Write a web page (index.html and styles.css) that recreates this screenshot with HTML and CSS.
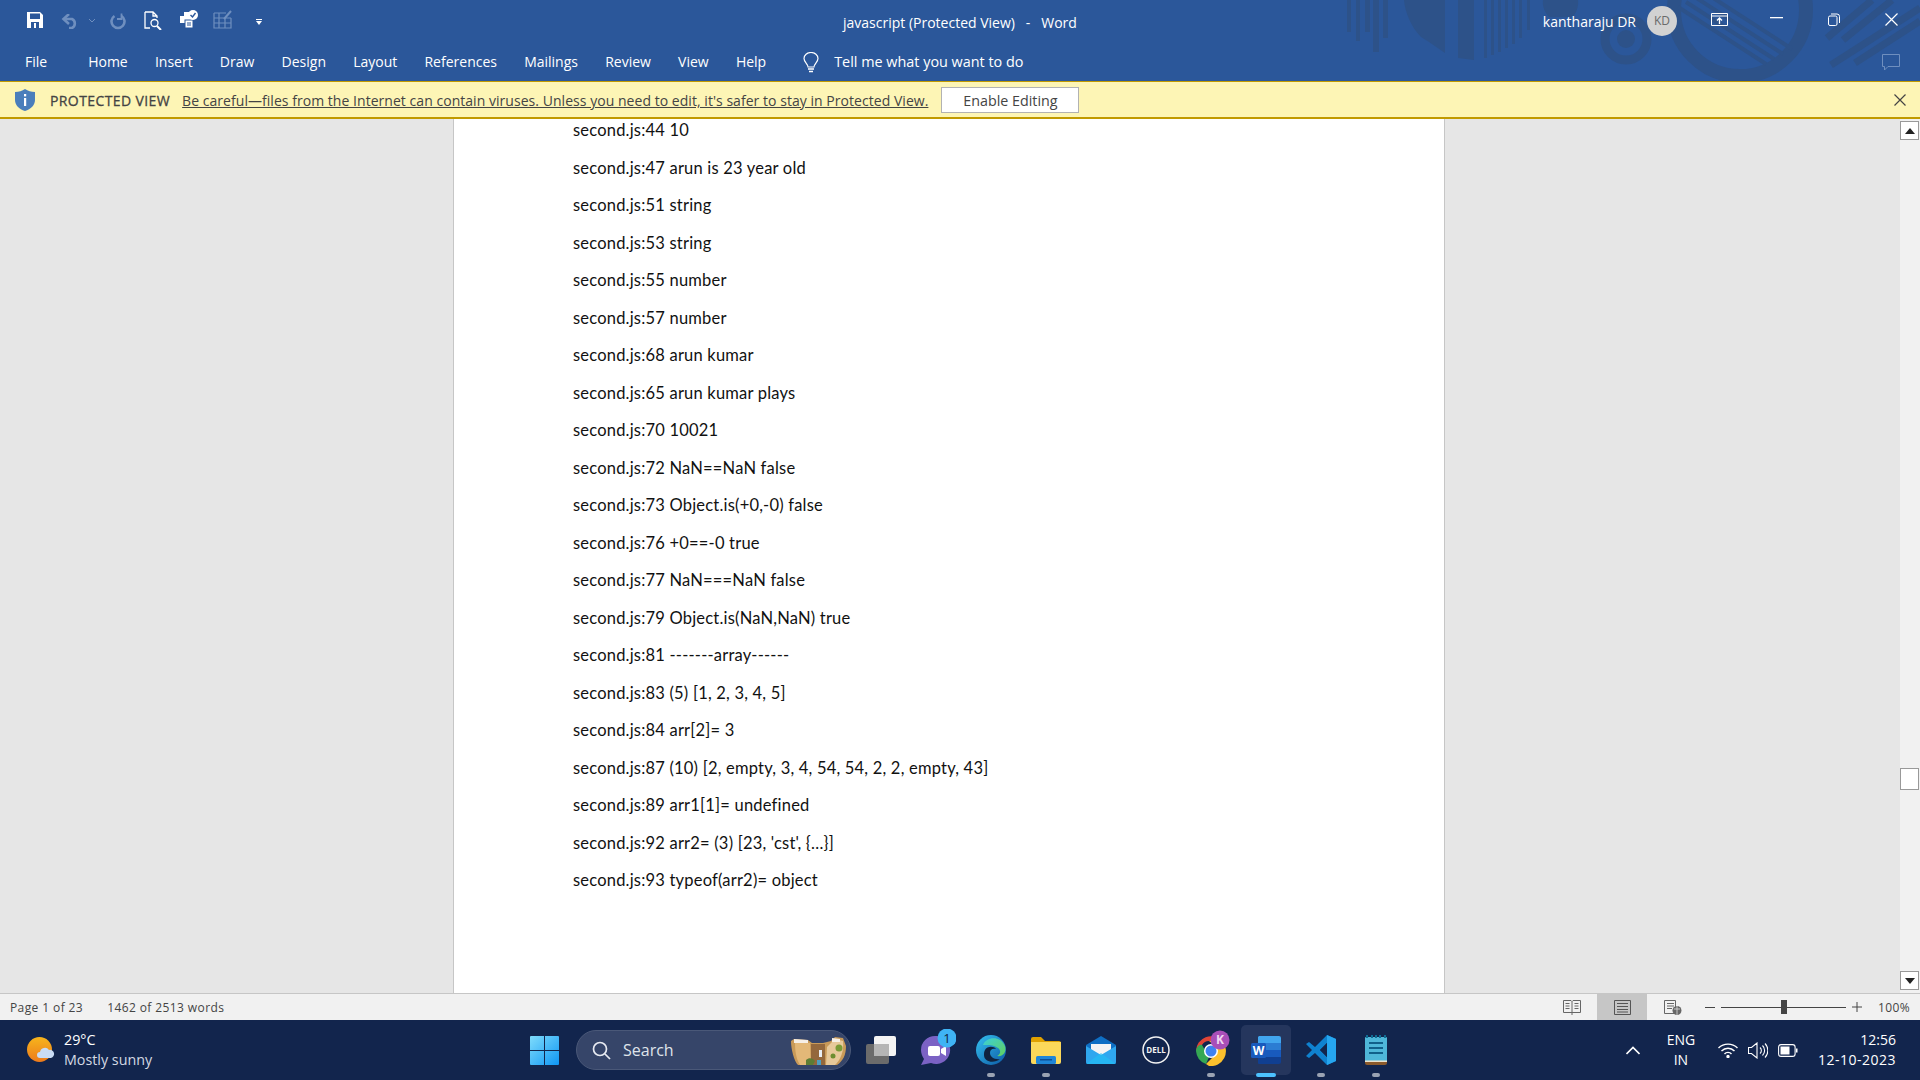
FILE: index.html
```html
<!DOCTYPE html>
<html lang="en">
<head>
    <meta charset="UTF-8">
    <title>javascript (Protected View) - Word</title>
    <link rel="stylesheet" href="styles.css">
</head>
<body>
    <header class="ribbon">
        <!-- faded pattern behind the window buttons -->
        <svg class="ribbon-art" width="620" height="81" viewBox="0 0 620 81">
            <g fill="#2d5289">
                <rect x="47" y="0" width="4" height="32"/><rect x="56" y="0" width="4" height="41"/><rect x="65" y="0" width="5" height="32"/><rect x="73" y="0" width="6" height="52"/><rect x="83" y="0" width="5" height="38"/>
                <path d="M104 0h25v42l-8-5C111 27 105 12 104 0z"/>
                <path d="M129 0h16v53l-16-11z"/>
                <path d="M158 0h16v60l-16-2z"/>
                <rect x="184" y="0" width="3" height="58"/><rect x="191" y="0" width="3" height="55"/><rect x="198" y="0" width="3" height="52"/><rect x="205" y="0" width="3" height="48"/><rect x="212" y="0" width="3" height="44"/><rect x="219" y="0" width="3" height="38"/><rect x="227" y="0" width="3" height="30"/>
                <path d="M243 0h35c1 6-2 14-6 17h-23c-4-4-7-11-6-17z"/>
                <circle cx="326" cy="39" r="9"/>
            </g>
            <g fill="none" stroke="#2d5289">
                <circle cx="326" cy="39" r="21" stroke-width="9"/>
                <circle cx="440" cy="10" r="66" stroke-width="14"/>
                <path d="M378 7l88 57M386 2l88 57M395 -3l88 57M404 -8l88 57" stroke-width="4"/>
                <path d="M527 38L572 0M543 40L592 0M531 65L620 8M555 63L620 21" stroke-width="7"/>
            </g>
        </svg>

        <div class="title-row">
            <div class="quick-access">
                <svg class="qa-save" width="16" height="16" viewBox="0 0 16 16"><path d="M0 0h13l3 3v13H0z" fill="#fff"/><rect x="3" y="1.5" width="10" height="5.5" fill="#2b579a"/><rect x="4" y="10" width="8" height="6" fill="#2b579a"/><rect x="7" y="11" width="2" height="5" fill="#fff"/></svg>
                <svg class="qa-undo" width="18" height="15" viewBox="0 0 18 15" fill="none" stroke="#6f8fbf" stroke-width="2.6"><path d="M3 5h8a5 5 0 0 1 0 9H8"/><path d="M8 0L2.5 5 8 10"/></svg>
                <svg class="qa-drop" width="6" height="4" viewBox="0 0 6 4" fill="none" stroke="#6f8fbf"><path d="M0 0l3 3 3-3"/></svg>
                <svg class="qa-redo" width="16" height="17" viewBox="0 0 16 17" fill="none" stroke="#6f8fbf" stroke-width="2.6"><path d="M4.5 3a6.5 6.5 0 1 0 7 0"/><path d="M11.500 .5v5.500h-4.500" stroke-width="1.800"/></svg>
                <svg class="qa-preview" width="18" height="19" viewBox="0 0 18 19" fill="none" stroke="#fff" stroke-width="1.3"><path d="M1 1h8l4 4v2M9 1v4h4M1 1v16h5"/><circle cx="10.5" cy="12" r="3.5"/><path d="M13 15l4 4" stroke-width="2"/></svg>
                <svg class="qa-print" width="20" height="19" viewBox="0 0 20 19"><path d="M1 6h4V2h6v4h3v7H1z" fill="#fff"/><rect x="6" y="10" width="8" height="8" fill="#fff" stroke="#2b579a"/><path d="M8 13h4M8 15h4" stroke="#2b579a"/><circle cx="14" cy="5" r="5" fill="#fff"/><path d="M11.5 5l2 2 3-4" fill="none" stroke="#2b579a" stroke-width="1.4"/></svg>
                <svg class="qa-table" width="20" height="19" viewBox="0 0 20 19" fill="none" stroke="#6f8fbf" stroke-width="1.2"><path d="M1 3h12M1 3v15h17V8M1 8h17M1 13h17M6 3v15M12 8v10"/><path d="M11 9l7-8" stroke-width="2"/></svg>
                <svg class="qa-more" width="6" height="6" viewBox="0 0 6 6"><path d="M0 0h6v1H0zM0 2h6L3 6z" fill="#fff"/></svg>
            </div>
            <div class="doc-title">javascript (Protected View)&nbsp;&nbsp; -&nbsp;&nbsp; Word</div>
            <div class="account">
                <span class="user-name">kantharaju DR</span>
                <span class="avatar">KD</span>
                <svg class="win-ribbon" width="17" height="13" viewBox="0 0 17 13" fill="none" stroke="#fff"><path d="M.5.5h16v12H.5zM.5 3h16" stroke-width="1"/><path d="M8.5 11V5M6 7.5l2.5-2.5L11 7.5" stroke-width="1.3"/></svg>
                <svg class="win-min" width="13" height="2" viewBox="0 0 13 2"><rect width="13" height="1.3" fill="#fff"/></svg>
                <svg class="win-restore" width="12" height="13" viewBox="0 0 12 13" fill="none" stroke="#fff"><rect x=".5" y="3" width="8.5" height="9.5" rx="1.5"/><path d="M3 1h6a2.5 2.5 0 0 1 2.5 2.5V10"/></svg>
                <svg class="win-close" width="13" height="13" viewBox="0 0 13 13" stroke="#fff" stroke-width="1.2"><path d="M.5.5l12 12M12.5.5l-12 12"/></svg>
            </div>
        </div>

        <nav class="tab-row">
            <span class="tab tab-file">File</span>
            <span class="tab tab-home">Home</span>
            <span class="tab">Insert</span>
            <span class="tab">Draw</span>
            <span class="tab">Design</span>
            <span class="tab">Layout</span>
            <span class="tab">References</span>
            <span class="tab">Mailings</span>
            <span class="tab">Review</span>
            <span class="tab">View</span>
            <span class="tab">Help</span>
            <svg class="bulb" width="16" height="21" viewBox="0 0 16 21" fill="none" stroke="#fff" stroke-width="1.2"><path d="M5 15c0-3-4-5-4-8.500a7 6 0 0 1 14 0C15 10 11 12 11 15z"/><path d="M5 17h6M6 19.5h4" stroke-width="1.5"/></svg>
            <span class="tell-me">Tell me what you want to do</span>
            <svg class="comment-icon" width="18" height="17" viewBox="0 0 18 17" fill="none" stroke="#6f8fbf"><path d="M.5.5h17v12H6L2.5 16v-3.500h-2z"/></svg>
        </nav>
    </header>

    <div class="protected-bar">
        <svg class="shield" width="20" height="22" viewBox="0 0 20 22"><path d="M10 0c3 2 6 3 10 3v8c0 5-4 9-10 11C4 20 0 16 0 11V3c4 0 7-1 10-3z" fill="#4a7ebb"/><rect x="9" y="9" width="2.2" height="8" fill="#fff"/><rect x="9" y="5" width="2.2" height="2.4" fill="#fff"/></svg>
        <strong class="protected-label">PROTECTED VIEW</strong>
        <span class="protected-msg">Be careful—files from the Internet can contain viruses. Unless you need to edit, it's safer to stay in Protected View.</span>
        <button class="enable-btn">Enable Editing</button>
        <svg class="bar-close" width="12" height="12" viewBox="0 0 12 12" stroke="#444" stroke-width="1.2"><path d="M.5.5l11 11M11.5.5l-11 11"/></svg>
    </div>

    <main class="workspace">
        <div class="page">
            <p>second.js:44 10</p>
            <p>second.js:47 arun is 23 year old</p>
            <p>second.js:51 string</p>
            <p>second.js:53 string</p>
            <p>second.js:55 number</p>
            <p>second.js:57 number</p>
            <p>second.js:68 arun kumar</p>
            <p>second.js:65 arun kumar plays</p>
            <p>second.js:70 10021</p>
            <p>second.js:72 NaN==NaN false</p>
            <p>second.js:73 Object.is(+0,-0) false</p>
            <p>second.js:76 +0==-0 true</p>
            <p>second.js:77 NaN===NaN false</p>
            <p>second.js:79 Object.is(NaN,NaN) true</p>
            <p>second.js:81 -------array------</p>
            <p>second.js:83 (5) [1, 2, 3, 4, 5]</p>
            <p>second.js:84 arr[2]= 3</p>
            <p>second.js:87 (10) [2, empty, 3, 4, 54, 54, 2, 2, empty, 43]</p>
            <p>second.js:89 arr1[1]= undefined</p>
            <p>second.js:92 arr2= (3) [23, 'cst', {…}]</p>
            <p>second.js:93 typeof(arr2)= object</p>
        </div>
        <div class="scrollbar">
            <span class="scroll-btn"><svg width="10" height="6" viewBox="0 0 10 6"><path d="M5 0l5 6H0z" fill="#222"/></svg></span>
            <span class="scroll-thumb"></span>
            <span class="scroll-btn scroll-down"><svg width="10" height="6" viewBox="0 0 10 6"><path d="M0 0h10L5 6z" fill="#222"/></svg></span>
        </div>
    </main>

    <footer class="status-bar">
        <span class="status-page">Page 1 of 23</span>
        <span class="status-words">1462 of 2513 words</span>
        <div class="status-right">
            <svg class="view-read" width="18" height="15" viewBox="0 0 18 15" fill="none" stroke="#666"><path d="M.5.5h7.5l1 1 1-1h7.500v12H.5zM9 1.500V15M2.500 3.500h4M2.500 6h4M2.500 8.500h4M11.500 3.500h4M11.500 6h4M11.500 8.500h4"/></svg>
            <span class="view-print"><svg width="17" height="15" viewBox="0 0 17 15" fill="none" stroke="#555"><path d="M.5.5h16v14H.5zM3 3.5h11M3 6.5h11M3 9.5h11M3 12h11"/></svg></span>
            <svg class="view-web" width="18" height="15" viewBox="0 0 18 15"><path d="M.5.5h11v13H.5zM3 3.5h7M3 6h7M3 8.5h5" fill="none" stroke="#666"/><circle cx="13" cy="10.5" r="4.5" fill="#666"/><path d="M10 9h6M13 6v9" stroke="#ddd" stroke-width=".8"/></svg>
            <span class="zoom-minus"></span>
            <div class="zoom-track"><span class="zoom-thumb"></span></div>
            <svg class="zoom-plus" width="10" height="10" viewBox="0 0 10 10" stroke="#444"><path d="M0 5h10M5 0v10"/></svg>
            <span class="zoom-pct">100%</span>
        </div>
    </footer>

    <div class="taskbar">
        <div class="weather">
            <svg width="28" height="26" viewBox="0 0 28 26">
                <defs><linearGradient id="sun" x1="0" y1="0" x2="0" y2="1"><stop offset="0" stop-color="#f7b51c"/><stop offset="1" stop-color="#ec7a1c"/></linearGradient></defs>
                <ellipse cx="12.5" cy="12.5" rx="12.5" ry="12.5" fill="url(#sun)"/>
                <path d="M13 21a3 3 0 0 1 0-6 5 5 0 0 1 9-2 4 4 0 0 1 2 8z" fill="#c9dcf5"/>
            </svg>
            <div class="weather-text">
                <span class="weather-temp">29°C</span>
                <span class="weather-desc">Mostly sunny</span>
            </div>
        </div>

        <div class="task-center">
            <span class="task-item">
                <svg width="29" height="29" viewBox="0 0 29 29">
                    <defs><linearGradient id="winlogo" x1="0" y1="0" x2="1" y2="1"><stop offset="0" stop-color="#7fdcfb"/><stop offset="1" stop-color="#0f96f5"/></linearGradient></defs>
                    <path d="M1 0h13v14H0V1a1 1 0 0 1 1-1zM15 0h13a1 1 0 0 1 1 1v13H15zM0 15h14v14H1a1 1 0 0 1-1-1zM15 15h14v13a1 1 0 0 1-1 1H15z" fill="url(#winlogo)"/>
                </svg>
            </span>
            <div class="search-pill">
                <svg width="19" height="19" viewBox="0 0 19 19" fill="none" stroke="#e8ebf2" stroke-width="1.7"><circle cx="8" cy="8" r="6.5"/><path d="M13 13l5 5"/></svg>
                <span class="search-label">Search</span>
                <svg class="search-art" width="55" height="30" viewBox="0 0 55 30">
                    <path d="M0 6l3-2 14 1 4 3h11l8-2 4-4 8 1 3 8c0 9-3 15-9 19H7C3 26 0 14 0 6z" fill="#c99a58"/>
                    <path d="M4 8h15l1 22H9C5 24 4 15 4 8z" fill="#e3b878"/>
                    <path d="M20 9h14v21H20z" fill="#94683c"/>
                    <path d="M36 12l8-8 8 2c1 10-2 18-8 24h-9z" fill="#e7c99a"/>
                    <path d="M3 4l14 1v3H3zM41 3l8 1v3h-8z" fill="#f6efe6"/>
                    <circle cx="48" cy="13" r="3.5" fill="#7a9a36"/><circle cx="42" cy="21" r="2.5" fill="#6d8d30"/>
                    <path d="M15 25c3-3 7-2 9 1l-2 4h-7z" fill="#5d7d35"/>
                    <rect x="28" y="15" width="3" height="7" fill="#e9eef4"/><rect x="26" y="25" width="4" height="5" fill="#4f9fc0"/>
                </svg>
            </div>
            <span class="task-item">
                <svg width="30" height="28" viewBox="0 0 30 28"><rect x="0" y="8" width="23" height="20" rx="2" fill="#6b6b6b"/><rect x="8" y="0" width="22" height="20" rx="2" fill="#f4f4f4"/><rect x="8" y="8" width="15" height="12" fill="#b5b5b5"/></svg>
            </span>
            <span class="task-item">
                <svg class="teams" width="40" height="36" viewBox="0 0 40 36">
                    <path d="M5 21a14 14 0 0 1 14-14h2a14 14 0 1 1-6 27l-10 2 3-6c-2-3-3-6-3-9z" fill="#7b62c4"/>
                    <rect x="12" y="17" width="12" height="10" rx="2" fill="#fff"/><path d="M25 20l5-3v10l-5-3z" fill="#fff"/>
                    <circle cx="31" cy="9" r="9.5" fill="#3fb4f5"/>
                    <text class="badge-text" x="31" y="13.5" text-anchor="middle">1</text>
                </svg>
            </span>
            <span class="task-item has-dot">
                <svg width="30" height="30" viewBox="0 0 30 30">
                    <defs><linearGradient id="edgeA" x1="0" y1="0" x2="1" y2="1"><stop offset="0" stop-color="#35c1f1"/><stop offset="1" stop-color="#0c59a4"/></linearGradient><linearGradient id="edgeB" x1="0" y1="0" x2="1" y2="1"><stop offset="0" stop-color="#3ccfd8"/><stop offset="1" stop-color="#62d05a"/></linearGradient></defs>
                    <circle cx="15" cy="15" r="15" fill="url(#edgeA)"/>
                    <path d="M7 10C10 2 24 0 29 11c2 7-3 11-8 10 4-2 4-6 1-8-5-4-12-3-15-3z" fill="url(#edgeB)"/>
                    <path d="M9 15c2-4 9-4 11-1-4-1-6 1-6 4 0 4 5 7 10 6-6 5-16 3-16-4 0-2 0-3 1-5z" fill="#10233f"/>
                </svg>
            </span>
            <span class="task-item has-dot">
                <svg width="30" height="27" viewBox="0 0 30 27"><path d="M0 2a2 2 0 0 1 2-2h8l4 4h14a2 2 0 0 1 2 2v4H0z" fill="#e0a100"/><path d="M0 5h30v20a2 2 0 0 1-2 2H2a2 2 0 0 1-2-2z" fill="#fbd85a"/><rect x="5" y="19" width="20" height="8" rx="1.5" fill="#1f86d8"/><rect x="9" y="22" width="12" height="1.5" fill="#0d4f96"/></svg>
            </span>
            <span class="task-item">
                <svg width="30" height="28" viewBox="0 0 30 28"><path d="M0 9L15 0l15 9v17a2 2 0 0 1-2 2H2a2 2 0 0 1-2-2z" fill="#0f6fc4"/><path d="M5 8h20v8l-10 4-10-4z" fill="#f4f4f4"/><path d="M0 10l15 9 15-9v16a2 2 0 0 1-2 2H2a2 2 0 0 1-2-2z" fill="#2fa7ef"/><path d="M0 28l15-11 15 11z" fill="#22c0f5" opacity=".6"/></svg>
            </span>
            <span class="task-item">
                <svg width="28" height="28" viewBox="0 0 28 28"><circle cx="14" cy="14" r="13" fill="none" stroke="#f2f2f2" stroke-width="1.5"/><text class="dell-text" x="14" y="17" text-anchor="middle">DELL</text></svg>
            </span>
            <span class="task-item has-dot">
                <svg class="chrome" width="36" height="36" viewBox="0 0 36 36">
                    <path d="M2 21a15 15 0 0 1 26-10H15a8 8 0 0 0-7 4z" fill="#e04436"/>
                    <path d="M8 15l7 12-3 7A15 15 0 0 1 2 21c0-2 2-7 6-6z" fill="#35a853"/>
                    <path d="M28 11a15 15 0 0 1-13 25l-3-2 8-8c3-3 2-10-5-15z" fill="#fbc02d"/>
                    <circle cx="17" cy="21" r="7" fill="#fff"/><circle cx="17" cy="21" r="5.5" fill="#3e82f1"/>
                    <circle cx="26" cy="10" r="9.5" fill="#a94fb8"/>
                    <text class="chrome-badge" x="26" y="14" text-anchor="middle">K</text>
                </svg>
            </span>
            <span class="task-item is-active">
                <svg width="30" height="28" viewBox="0 0 30 28"><path d="M8 0h20a2 2 0 0 1 2 2v6H7V1z" fill="#41a5ee"/><rect x="7" y="7" width="23" height="7" fill="#2b7cd3"/><rect x="7" y="14" width="23" height="7" fill="#185abd"/><path d="M7 21h23v5a2 2 0 0 1-2 2H8a1 1 0 0 1-1-1z" fill="#103f91"/><rect x="0" y="7" width="15" height="15" rx="1.5" fill="#185abd"/><text class="word-w" x="7.5" y="18.5" text-anchor="middle">W</text></svg>
            </span>
            <span class="task-item has-dot">
                <svg width="30" height="30" viewBox="0 0 30 30"><path d="M21 0l9 4v22l-9 4-12-12-6 5-3-2 6-6-6-6 3-2 6 5zM21 8l-7 7 7 7z" fill="#0f82d0"/><path d="M21 0l9 4v22l-9 4z" fill="#26a6ef"/><path d="M21 8v14l-7-7z" fill="#12254d"/></svg>
            </span>
            <span class="task-item has-dot">
                <svg width="22" height="30" viewBox="0 0 22 30"><rect y="2" width="22" height="26" rx="1" fill="#4fb7d9"/><path d="M0 26h22v2a2 2 0 0 1-2 2H2a2 2 0 0 1-2-2z" fill="#8b5a2b"/><rect y="25.5" width="22" height="1.5" fill="#e9e3d0"/><path d="M4 8h14M4 13h14M4 18h14" stroke="#11608a" stroke-width="2"/><path d="M2 0v3M7 0v3M11 0v3M15 0v3M20 0v3" stroke="#0f6c93" stroke-width="2"/></svg>
            </span>
        </div>

        <div class="tray">
            <svg class="tray-up" width="14" height="9" viewBox="0 0 14 9" fill="none" stroke="#fff" stroke-width="1.6"><path d="M.5 8L7 1.5 13.5 8"/></svg>
            <div class="tray-lang"><span>ENG</span><span>IN</span></div>
            <svg class="tray-wifi" width="20" height="15" viewBox="0 0 20 15" fill="none" stroke="#fff" stroke-width="1.4"><path d="M.5 5a13.5 13.5 0 0 1 19 0M3.5 8a9 9 0 0 1 13 0M6.5 11a4.5 4.5 0 0 1 7 0"/><circle cx="10" cy="13.5" r="1" fill="#fff"/></svg>
            <svg class="tray-sound" width="20" height="17" viewBox="0 0 20 17" fill="none" stroke="#fff" stroke-width="1.1"><path d="M.5 5.5h3L9 1v15l-5.5-4.5h-3zM12 5.5a4 4 0 0 1 0 6M14.5 3.5a7 7 0 0 1 0 10M17 1.5a10 10 0 0 1 0 14"/></svg>
            <svg class="tray-batt" width="20" height="13" viewBox="0 0 20 13" fill="none" stroke="#fff" stroke-width="1.1"><rect x=".6" y=".6" width="16.5" height="11.8" rx="2.5"/><rect x="2.5" y="2.5" width="9" height="8" fill="#fff" stroke="none"/><rect x="18" y="4.5" width="1.5" height="4" fill="#fff" stroke="none"/></svg>
            <div class="tray-clock"><span>12:56</span><span class="tray-date">12-10-2023</span></div>
        </div>
    </div>
</body>
</html>
```

FILE: styles.css
```css
html, body {
    margin: 0;
    height: 100%;
}
body {
    width: 1920px;
    height: 1080px;
    overflow: hidden;
    display: flex;
    flex-direction: column;
    font-family: 'Open Sans', sans-serif;
    font-size: 14px;
    color: #444;
}
svg {
    display: block;
    flex: none;
}

/* ribbon */
.ribbon {
    position: relative;
    height: 81px;
    background-color: #2b579a;
    color: #fff;
    flex: none;
}
.ribbon-art {
    position: absolute;
    top: 0;
    right: 0;
}
.title-row {
    position: relative;
    height: 44px;
    display: flex;
    align-items: center;
}
.quick-access {
    width: 270px;
    height: 44px;
    display: flex;
    align-items: center;
    flex: none;
}
.qa-save { margin: -4px 0 0 27px; }
.qa-undo { margin: -2px 0 0 18px; }
.qa-drop { margin: -2px 0 0 10px; }
.qa-redo { margin: -2px 0 0 15px; }
.qa-preview { margin: -4px 0 0 18px; }
.qa-print { margin: -6px 0 0 17px; }
.qa-table { margin: -6px 0 0 14px; }
.qa-more { margin: 0 0 0 23px; }
.doc-title {
    margin-left: 573px;
    font-size: 14px;
    white-space: nowrap;
}
.account {
    margin-left: auto;
    height: 44px;
    display: flex;
    align-items: center;
}
.user-name {
    font-size: 14px;
    margin-top: -1px;
}
.avatar {
    width: 30px;
    height: 30px;
    margin: -2px 0 0 11px;
    border-radius: 50%;
    background-color: #d2d2d2;
    color: #6a6a6a;
    font-size: 12px;
    line-height: 30px;
    text-align: center;
}
.win-ribbon { margin: -6px 0 0 34px; }
.win-min { margin: -8px 0 0 42px; }
.win-restore { margin: -6px 0 0 45px; }
.win-close { margin: -6px 22px 0 45px; }

.tab-row {
    position: relative;
    height: 37px;
    display: flex;
    align-items: center;
    font-size: 14px;
    padding-bottom: 3px;
    box-sizing: border-box;
}
.tab {
    margin-left: 27.2px;
    white-space: nowrap;
}
.tab-file { margin-left: 25px; }
.tab-home { margin-left: 41px; }
.bulb { margin: 2px 0 0 37px; }
.tell-me {
    margin-left: 15px;
    font-size: 14.4px;
    white-space: nowrap;
}
.comment-icon {
    margin: 2px 20px 0 auto;
}

/* yellow protected view bar */
.protected-bar {
    height: 38px;
    box-sizing: border-box;
    flex: none;
    display: flex;
    align-items: center;
    background-color: #fdf5b5;
    border-top: 1px solid #c19a00;
    border-bottom: 2px solid #c19a00;
}
.shield { margin-left: 15px; }
.protected-label {
    margin: 1px 0 0 15px;
    font-weight: 400;
    letter-spacing: .4px;
    -webkit-text-stroke: .3px #444;
    white-space: nowrap;
}
.protected-msg {
    margin: 1px 0 0 12px;
    letter-spacing: .04px;
    text-decoration: underline;
    white-space: nowrap;
}
.enable-btn {
    width: 138px;
    height: 26px;
    margin: 1px 0 0 13px;
    background-color: #fff;
    border: 1px solid #b2b2b2;
    color: #444;
    font-family: inherit;
    font-size: 14.3px;
    padding: 0;
}
.bar-close { margin: 0 14px 0 auto; }

/* document area */
.workspace {
    flex: 1;
    min-height: 0;
    display: flex;
    justify-content: flex-end;
    background-color: #e6e6e6;
}
.page {
    width: 992px;
    margin-right: 455px;
    padding: 1px 0 0 119px;
    box-sizing: border-box;
    background-color: #fff;
    border-left: 1px solid #c6c6c6;
    border-right: 1px solid #c6c6c6;
    overflow: hidden;
    font-family: 'Lato', sans-serif;
    font-size: 16.5px;
    letter-spacing: .2px;
    color: #111;
}
.page p {
    margin: 0;
    height: 37.5px;
    line-height: 20px;
}
.scrollbar {
    width: 20px;
    padding: 2px 1px 3px 0;
    box-sizing: border-box;
    display: flex;
    flex-direction: column;
    background-color: #f1f1f1;
}
.scroll-btn, .scroll-thumb {
    height: 19px;
    background-color: #fff;
    border: 1px solid #999;
    box-sizing: border-box;
    display: flex;
    align-items: center;
    justify-content: center;
}
.scroll-thumb {
    height: 22px;
    margin-top: 628px;
}
.scroll-down { margin-top: auto; }

/* status bar */
.status-bar {
    height: 27px;
    box-sizing: border-box;
    flex: none;
    display: flex;
    align-items: center;
    background-color: #f1f1f1;
    border-top: 1px solid #c6c6c6;
    font-size: 12px;
    letter-spacing: .4px;
    color: #444;
}
.status-page { margin-left: 10px; }
.status-words { margin-left: 24px; }
.status-right {
    margin-left: auto;
    height: 100%;
    display: flex;
    align-items: center;
}
.view-print {
    width: 50px;
    height: 100%;
    margin: 0 17px 0 16px;
    background-color: #c6c6c6;
    display: flex;
    align-items: center;
    justify-content: center;
}
.zoom-minus {
    width: 10px;
    height: 1px;
    margin-left: 23px;
    background-color: #444;
}
.zoom-track {
    width: 125px;
    height: 1px;
    margin-left: 6px;
    background-color: #444;
    display: flex;
    align-items: center;
    padding-left: 60px;
    box-sizing: border-box;
}
.zoom-thumb {
    width: 6px;
    height: 14px;
    background-color: #444;
}
.zoom-plus { margin-left: 6px; }
.zoom-pct {
    width: 32px;
    margin: 0 10px 0 16px;
    text-align: right;
}

/* windows taskbar */
.taskbar {
    height: 60px;
    flex: none;
    display: flex;
    align-items: center;
    background-color: #12254d;
    color: #fff;
}
.weather {
    width: 517px;
    display: flex;
    align-items: center;
    padding-left: 27px;
    box-sizing: border-box;
    flex: none;
}
.weather-text {
    margin-left: 9px;
    display: flex;
    flex-direction: column;
    line-height: 20px;
    font-size: 14.3px;
}
.weather-desc { color: #d3d8e2; }
.task-center {
    display: flex;
    align-items: center;
}
.task-item {
    position: relative;
    width: 55px;
    height: 50px;
    display: flex;
    align-items: center;
    justify-content: center;
    box-sizing: border-box;
}
.has-dot::after, .is-active::after {
    content: "";
    position: absolute;
    bottom: -2px;
    left: 23.5px;
    width: 8px;
    height: 4px;
    border-radius: 2px;
    background-color: #9aa3b3;
}
.is-active {
    width: 50px;
    margin: 0 2.5px;
    background-color: #25365d;
    border-radius: 5px;
}
.is-active::after {
    left: 15px;
    width: 20px;
    background-color: #4cc2ff;
}
.search-pill {
    width: 275px;
    height: 40px;
    margin: 0 2px 0 4px;
    padding: 0 4px 0 15px;
    box-sizing: border-box;
    display: flex;
    align-items: center;
    background-color: #364569;
    border: 1px solid #4a5878;
    border-radius: 20px;
    font-size: 16px;
    color: #dfe3ea;
}
.search-label { margin-left: 12px; }
.search-art { margin: 0 0 0 auto; }
.teams { margin-top: -6px; }
.chrome { margin: -5px 0 0 2px; }
.badge-text {
    fill: #10233f;
    font-size: 13px;
    font-family: 'Open Sans', sans-serif;
}
.chrome-badge {
    fill: #f0d8f2;
    font-size: 12px;
    font-weight: 700;
    font-family: 'Open Sans', sans-serif;
}
.dell-text {
    fill: #f2f2f2;
    font-size: 8px;
    font-weight: 700;
    font-family: 'Open Sans', sans-serif;
}
.word-w {
    fill: #fff;
    font-size: 12px;
    font-weight: 700;
    font-family: 'Open Sans', sans-serif;
}
.tray {
    margin-left: auto;
    display: flex;
    align-items: center;
}
.tray-lang, .tray-clock {
    display: flex;
    flex-direction: column;
    line-height: 20px;
    font-size: 14px;
}
.tray-lang {
    margin-left: 26px;
    width: 30px;
    align-items: center;
}
.tray-wifi { margin-left: 22px; }
.tray-sound { margin-left: 10px; }
.tray-batt { margin-left: 10px; }
.tray-clock {
    margin: 0 24px 0 20px;
    align-items: flex-end;
}
.tray-date { letter-spacing: .5px; }
```
